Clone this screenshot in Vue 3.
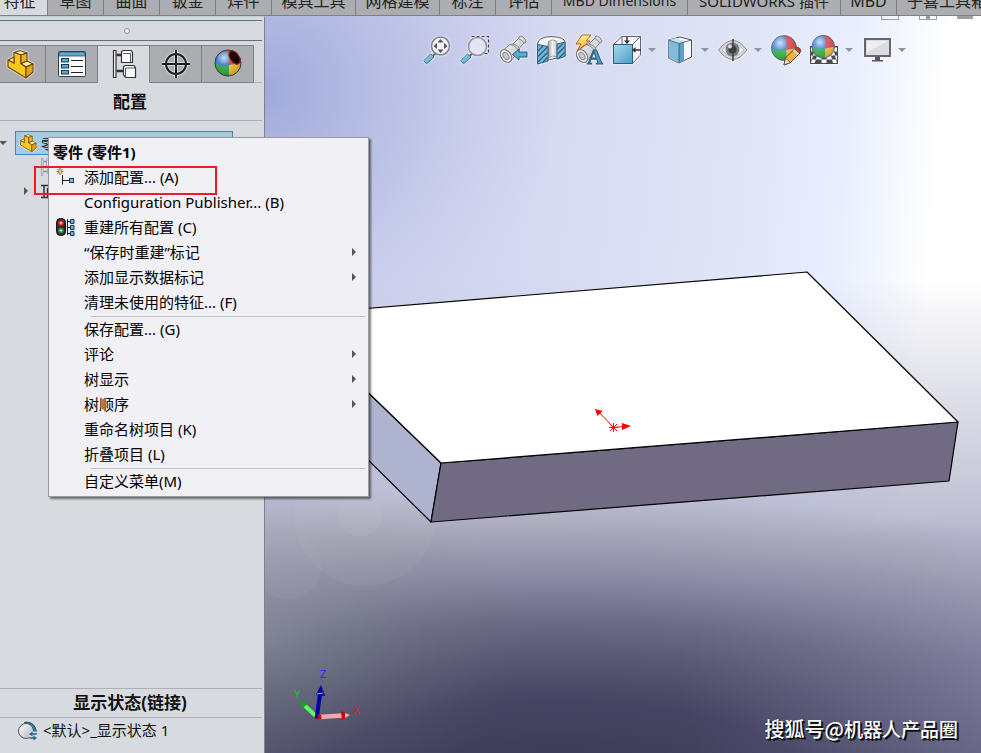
<script setup>
const commandTabs = [
  { label: '特征', size: 'first' },
  { label: '草图', size: 'short' },
  { label: '曲面', size: 'short' },
  { label: '钣金', size: 'short' },
  { label: '焊件', size: 'short' },
  { label: '模具工具', size: 'medium' },
  { label: '网格建模', size: 'medium' },
  { label: '标注', size: 'short' },
  { label: '评估', size: 'short' },
  { label: 'MBD Dimensions', size: 'long' },
  { label: 'SOLIDWORKS 插件', size: 'longer' },
  { label: 'MBD', size: 'short' },
  { label: '子喜工具箱', size: 'last' },
]

const panelTabs = [
  { icon: 'part', label: '设计树' },
  { icon: 'props', label: '属性' },
  { icon: 'config', label: '配置' },
  { icon: 'target', label: '尺寸专家' },
  { icon: 'appearance', label: '外观' },
]
const activePanel = 'config'

const viewTools = [
  { icon: 'fit', label: '整屏显示' },
  { icon: 'area', label: '局部放大' },
  { icon: 'previous', label: '上一视图' },
  { icon: 'section', label: '剖面视图' },
  { icon: 'annotation', label: '动态注解视图' },
  { icon: 'orient', label: '视图定向', menu: true },
  { icon: 'style', label: '显示样式', menu: true },
  { icon: 'eye', label: '隐藏/显示', menu: true },
  { icon: 'paint', label: '编辑外观' },
  { icon: 'scene', label: '应用布景', menu: true },
  { icon: 'monitor', label: '视图设定', menu: true },
]

const menuGroups = [
  [
    { label: '添加配置... (A)', icon: 'add-config' },
    { label: 'Configuration Publisher... (B)' },
    { label: '重建所有配置 (C)', icon: 'rebuild' },
    { label: '“保存时重建”标记', sub: true },
    { label: '添加显示数据标记', sub: true },
    { label: '清理未使用的特征... (F)' },
  ],
  [
    { label: '保存配置... (G)' },
    { label: '评论', sub: true },
    { label: '树显示', sub: true },
    { label: '树顺序', sub: true },
    { label: '重命名树项目 (K)' },
    { label: '折叠项目 (L)' },
  ],
  [{ label: '自定义菜单(M)' }],
]
</script>

<template>
  <div class="app">
    <svg class="sprite" aria-hidden="true">
      <defs>
        <linearGradient id="g-blue" x1="0" y1="0" x2="1" y2="1">
          <stop offset="0" stop-color="#a9d9ee" /><stop offset="1" stop-color="#4b9cc4" />
        </linearGradient>
        <linearGradient id="g-metal" x1="0" y1="0" x2="1" y2="1">
          <stop offset="0" stop-color="#ffffff" /><stop offset="1" stop-color="#b4b4ba" />
        </linearGradient>
        <linearGradient id="g-hole" x1="0" y1="0" x2="1" y2="0">
          <stop offset="0" stop-color="#9b9ba2" /><stop offset="0.500" stop-color="#f4f4f8" /><stop offset="1" stop-color="#c4c4ca" />
        </linearGradient>
        <radialGradient id="g-shine" cx="0.35" cy="0.3" r="0.75">
          <stop offset="0" stop-color="#fff" stop-opacity="0.75" />
          <stop offset="0.4" stop-color="#fff" stop-opacity="0.1" />
          <stop offset="1" stop-color="#000" stop-opacity="0.2" />
        </radialGradient>
        <linearGradient id="g-bolt" x1="0" y1="0" x2="0" y2="1">
          <stop offset="0" stop-color="#fff0a8" /><stop offset="1" stop-color="#f5a623" />
        </linearGradient>
      </defs>

      <symbol id="i-part" viewBox="0 0 32 32">
        <g stroke="#6b4206" stroke-width="1.1" stroke-linejoin="round">
          <path d="M4 12 L10 9 L10 4.500 L16 2.500 L23 5 V13 L29 16 V24 L22 30 L4 19 Z" fill="#fbd32c" stroke="#fff" stroke-opacity="0.600" stroke-width="3" />
          <path d="M10 4.500 L17 7 L23 5 L16 2.500 Z" fill="#fff0a0" />
          <path d="M10 4.500 L17 7 V15.500 L22 19 V30 L4 19 V12 L10 15 Z" fill="#f8c81e" />
          <path d="M4 12 L10 9 V15 Z" fill="#ffe880" />
          <path d="M17 15.500 L23 13 L29 16 L22 19 Z" fill="#fff0a0" />
          <path d="M22 19 L29 16 V24 L22 30 Z" fill="#dfa51a" />
          <path d="M17 7 L23 5 V13 L17 15.500 Z" fill="#e9b31c" />
        </g>
      </symbol>

      <symbol id="i-props" viewBox="0 0 32 32">
        <rect x="2.500" y="3.500" width="27" height="25" rx="1" fill="#fafafa" stroke="#2b4152" />
        <path d="M3 4h26v4H3z" fill="#5fa9d0" stroke="#1e4c6b" stroke-width="0.800" />
        <g fill="#5aa9ce" stroke="#173a52">
          <rect x="5.500" y="10.500" width="7" height="3.500" />
          <rect x="5.500" y="16.500" width="7" height="3.500" />
          <rect x="5.500" y="22.500" width="7" height="3.500" />
        </g>
        <path d="M15 12.500h12M15 18.500h12M15 24.500h12" stroke="#222" stroke-width="1.200" />
      </symbol>

      <symbol id="i-config" viewBox="0 0 32 32">
        <g fill="#fff" stroke="#333" stroke-width="1.200">
          <path d="M5.500 2.500h2.500v27H5.500z" />
          <path d="M8.500 7h6M8.500 23h7" stroke-width="2.400" />
          <path d="M13.500 3.500 L15.500 2.500 H23 L24.500 4.500 V14.500 H13.500 Z" />
          <path d="M15 5.500h7.500v8.500" fill="none" stroke-width="0.800" />
          <path d="M15.500 18.500 L17.500 17.500 H26 L27.500 20 V29.500 H18 L15.500 27 Z" />
          <path d="M17.500 20h10M17.500 20v9" fill="none" stroke-width="0.800" />
        </g>
      </symbol>

      <symbol id="i-target" viewBox="0 0 32 32">
        <g fill="none" stroke="#fff" stroke-width="4" opacity="0.500">
          <circle cx="16" cy="16" r="10" /><path d="M16 2v28M2 16h28" />
        </g>
        <g fill="none" stroke="#1d1d1d" stroke-width="2">
          <circle cx="16" cy="16" r="10" /><path d="M16 2v28M2 16h28" />
        </g>
      </symbol>

      <symbol id="i-appearance" viewBox="0 0 32 32">
        <circle cx="16" cy="15" r="13" fill="#2f73c9" />
        <path d="M16 2 A13 13 0 0 1 29 15 L17 17 Z" fill="#d5362b" />
        <path d="M29 15 A13 13 0 0 1 17 28 L17 17 Z" fill="#eebf2d" />
        <path d="M3 15 Q10 20 17 17 L17 28 A13 13 0 0 1 3 15 Z" fill="#2ca53a" />
        <circle cx="16" cy="15" r="13" fill="url(#g-shine)" stroke="#3a3a3a" />
        <ellipse cx="22.500" cy="9.500" rx="4.500" ry="7.500" transform="rotate(-35 22.500 9.500)" fill="#14090a" stroke="#a8241d" />
      </symbol>

      <symbol id="i-fit" viewBox="0 0 32 32">
        <path d="M14.500 19.500 L11 22.500" stroke="#666" stroke-width="2" />
        <path d="M9.500 20 L13 23 L6 29.500 Q3.500 29 3 26.500 Z" fill="url(#g-blue)" stroke="#3b7593" />
        <circle cx="19.500" cy="12" r="9" fill="#f1f1f8" stroke="#85858d" stroke-width="1.600" />
        <path d="M19.500 5l3 3.500h-6zM19.500 19l3-3.500h-6zM12.500 12l3.500-3v6zM26.500 12l-3.500-3v6z" fill="#555" />
      </symbol>
      <symbol id="i-area" viewBox="0 0 32 32">
        <path d="M12.500 2.500h17v17h-5" fill="none" stroke="#444" stroke-width="1.200" stroke-dasharray="3 2" />
        <path d="M13.500 19.500 L10 22.500" stroke="#666" stroke-width="2" />
        <path d="M8.500 20 L12 23 L5 29.500 Q2.500 29 2 26.500 Z" fill="url(#g-blue)" stroke="#3b7593" />
        <circle cx="18.500" cy="12.500" r="9" fill="#e4e4f6" stroke="#94949c" stroke-width="1.600" />
      </symbol>
      <symbol id="scope" viewBox="0 0 32 32">
        <path d="M5 17 L13 10.500 L16 10 L22 4 Q22 2 24 2 Q28 3 29 7 Q29 9 27 9 L22.500 14 L22 17 L13 28 Q3 29 5 17 Z" fill="url(#g-metal)" stroke="#7c7c84" />
        <path d="M13 10.500 Q20 12 22 18 M16 10 Q21 11 22.500 14.500 M21.500 4.500 Q25.500 6 27 9.500" fill="none" stroke="#8a8a90" />
        <ellipse cx="9" cy="22" rx="5" ry="7" transform="rotate(-35 9 22)" fill="#efeff4" stroke="#76767c" />
        <ellipse cx="9" cy="22" rx="2.500" ry="4" transform="rotate(-35 9 22)" fill="#c8c8d0" stroke="#88888e" />
      </symbol>
      <symbol id="i-previous" viewBox="0 0 32 32">
        <use href="#scope" />
        <path d="M15.500 20.500 L22 15 V18 H30 V23 H22 V26 Z" fill="#59a9cf" stroke="#235f80" />
      </symbol>
      <symbol id="i-section" viewBox="0 0 32 32">
        <path d="M2.500 10 Q3 3 16 2.500 Q29.500 3 30 8 V22 L22 24 L13 26 L2.500 29.500 Z" fill="#f4f4f8" stroke="#5b5b62" />
        <path d="M13 9.500 Q13 6 18 6 Q22 6.500 22 9 V23 Q18 20.500 13 24 Z" fill="url(#g-hole)" stroke="#8b8b92" stroke-width="0.800" />
        <path d="M2.500 10.500 L13 12.500 V27 L2.500 30 Z" fill="#6fb8da" stroke="#2f5f7a" />
        <path d="M22 10 L30 8 V22.500 L22 25 Z" fill="#6fb8da" stroke="#2f5f7a" />
        <path d="M3 17l5-5M3 22.500l9.500-9.500M3 28l9.500-9.500M8 28l4.500-4.500M22.500 15l5.500-5.500M22.500 20l7-7M24 24l5.500-5.500" stroke="#2f5f7a" stroke-width="1.200" />
      </symbol>
      <symbol id="i-annotation" viewBox="0 0 32 32">
        <use href="#scope" />
        <path d="M9 1 H18 L13 7 H17 L4 17 L8 10 H3 Z" fill="url(#g-bolt)" stroke="#b2650c" />
        <text x="14" y="30" class="glyph-a">A</text>
      </symbol>
      <symbol id="i-orient" viewBox="0 0 32 32">
        <path d="M11 2.500 H29.500 V21 L21.500 29.500 V10.500 H2.500 Z" fill="#f5f5fb" />
        <path d="M2.500 10.500 L11 2.500 H29.500 V21 L21.500 29.500 M21.500 10.500 L29.500 2.500 M11 2.500V10" fill="none" stroke="#66666e" />
        <rect x="2.500" y="10.500" width="19" height="19" fill="url(#g-blue)" stroke="#2b5e78" />
        <path d="M16 3v6M30 16h-7" stroke="#333" stroke-width="1.500" />
        <path d="M13 6.500h6l-3 3.500zM24.500 13v6l-3.500-3z" fill="#333" />
      </symbol>
      <symbol id="i-style" viewBox="0 0 32 32">
        <path d="M4.500 6 L16 3 L27.500 6 V23 L15 29 L4.500 24 Z" fill="#f7f7fb" stroke="#4c4c54" />
        <path d="M4.500 6 L15 9.500 V29 L4.500 24 Z" fill="#7fbddb" />
        <path d="M15 9.500 L20 8 V26.500 L15 29 Z" fill="#58a3c9" />
        <path d="M4.500 6 L12 4 L22 7.500 L15 9.500 Z" fill="#c4e4f1" />
        <path d="M4.500 6 L15 9.500 L27.500 6 M15 9.500 V29" fill="none" stroke="#4c4c54" stroke-width="0.800" />
      </symbol>
      <symbol id="i-eye" viewBox="0 0 32 32">
        <path d="M1.500 16 Q16 -3 30 16 Q16 35 1.500 16 Z" fill="#d5d5dc" stroke="#8a8a92" />
        <path d="M5 16 Q16 3 27 16 Q16 29 5 16 Z" fill="#f7f7fa" stroke="#aaa" stroke-width="0.800" />
        <circle cx="15.500" cy="15.500" r="7" fill="#7c7c82" />
        <circle cx="15.500" cy="15.500" r="4" fill="#3c3c40" />
        <circle cx="13" cy="12.500" r="2" fill="#d9d9de" />
        <path d="M16 5v22" stroke="#444" stroke-width="1.600" />
      </symbol>
      <symbol id="ball" viewBox="0 0 32 32">
        <circle cx="14" cy="14" r="12.500" fill="#4587dc" />
        <path d="M14 1.500 Q18 8 16 16 L26.500 14 A12.500 12.500 0 0 0 14 1.500 Z" fill="#dc4b50" />
        <path d="M16 16 L26.500 14 A12.500 12.500 0 0 1 15 26.500 Z" fill="#f0c245" />
        <path d="M1.500 15 Q9 17 16 16 Q17 22 15 26.500 A12.500 12.500 0 0 1 1.500 15 Z" fill="#36b24a" />
        <circle cx="14" cy="14" r="12.500" fill="url(#g-shine)" stroke="#5b5b70" stroke-width="0.800" />
      </symbol>
      <symbol id="i-paint" viewBox="0 0 32 32">
        <use href="#ball" />
        <path d="M14 31 L15.500 24 L25 14.500 L30 19 L20.500 28.500 Z" fill="#f3b14b" stroke="#55402a" />
        <path d="M25 14.500 L27 13 Q31 14 31 17.500 L29.500 19 Z" fill="#c63c37" stroke="#6b4642" />
        <path d="M15.500 24 L20.500 28.500 L14 31 Z" fill="#f0dfc5" stroke="#55402a" stroke-width="0.800" />
        <path d="M23.500 16l5 4.500" stroke="#ddd" stroke-width="1.600" />
      </symbol>
      <symbol id="i-scene" viewBox="0 0 32 32">
        <path d="M2 12h28v18H2z" fill="#4a4a50" />
        <path d="M3 13.500h3.500l-1 4H3zM25.500 13.500H29v4h-2.500zM6 17.500h4l-1 4H5zM22 17.500h4l1 4h-4zM3 21.500h2l-1 4H3zM9 21.500h4.500v4h-5.500zM18.500 21.500h4.500l1 4h-5.500zM27 21.500h2v4h-1zM4 25.500h4l-1.500 3.500h-3.500zM13.500 25.500h5v3.500h-5zM24 25.500h4l1 3.500h-4z" fill="#fff" />
        <use href="#ball" x="2.500" y="0" width="29" height="29" />
      </symbol>
      <symbol id="i-monitor" viewBox="0 0 32 32">
        <rect x="4" y="5" width="25" height="17" fill="#dcdce0" stroke="#66666c" stroke-width="2" />
        <path d="M6 7h21L6 18z" fill="#efeff2" />
        <path d="M14 23h5v3h3v1.500H11V26h3z" fill="#55555b" />
      </symbol>

      <symbol id="i-add-config" viewBox="0 0 20 20">
        <path d="M6.500 8v9.500M6.500 13.500h8" stroke="#222" fill="none" />
        <rect x="13.500" y="11.500" width="4" height="4" fill="#79bde0" stroke="#123f5c" />
        <path d="M4 1v7M.500 4.500h7M1.500 2l5 5M6.500 2l-5 5" stroke="#a05a10" />
        <circle cx="4" cy="4.500" r="1.200" fill="#ffd873" />
      </symbol>
      <symbol id="i-rebuild" viewBox="0 0 20 20">
        <rect x="0.500" y="1.500" width="9" height="17" rx="4" fill="#2b2b2b" stroke="#111" />
        <circle cx="5" cy="6" r="3" fill="#cf2020" /><path d="M5 4.500v3M3.500 6h3" stroke="#fff" stroke-width="0.800" />
        <circle cx="5" cy="13.500" r="3" fill="#218c33" /><path d="M5 12v3M3.500 13.500h3" stroke="#fff" stroke-width="0.800" />
        <path d="M11.500 2v16M11.500 4.500h3M11.500 10.500h3M11.500 16.500h3" stroke="#222" />
        <path d="M14.500 2.500h3.500v4h-3.500zM14.500 8.500h3.500v4h-3.500zM14.500 14.500h3.500v4h-3.500z" fill="#6bb4dc" stroke="#123f5c" />
      </symbol>
      <symbol id="i-display" viewBox="0 0 20 20">
        <path d="M8 1 Q17 1 18.500 11 L14 12 A8 8 0 0 0 6 2Z" fill="#2b83ae" stroke="#1a4f6d" />
        <circle cx="8" cy="10" r="7.500" fill="url(#g-metal)" stroke="#55555d" />
        <path d="M11.500 10.500h8v9h-8z" fill="#d7dbdf" />
        <path d="M19 13h-6M11.500 17h6" stroke="#1d6a94" stroke-width="1.400" />
        <path d="M14.500 10.500v5L11 13zM15.500 14.500v5L19 17z" fill="#1d6a94" />
      </symbol>
    </svg>

    <nav class="commands">
      <button v-for="tab in commandTabs" :key="tab.label" type="button" class="command" :class="tab.size">{{ tab.label }}</button>
    </nav>

    <div class="workspace">
      <aside class="sidebar">
        <div class="grip"><span class="dot"></span></div>
        <div class="panel-tabs">
          <button
            v-for="tab in panelTabs"
            :key="tab.icon"
            type="button"
            class="panel-tab"
            :class="{ active: tab.icon === activePanel }"
            :aria-label="tab.label"
          >
            <svg class="icon"><use :href="'#i-' + tab.icon" /></svg>
          </button>
        </div>
        <h2 class="panel-title">配置</h2>

        <div class="tree">
          <div class="node root">
            <span class="caret down"></span>
            <div class="selected">
              <svg class="icon-small"><use href="#i-part" /></svg>
              <span>零件1</span>
            </div>
          </div>
          <div class="node child">
            <svg class="icon-small faded"><use href="#i-config" /></svg>
          </div>
          <div class="node child">
            <span class="caret right"></span>
            <svg class="icon-small" viewBox="0 0 20 20">
              <path d="M2 4.500h12M5 4.500v12M2 16.500h9M8.500 7v9" fill="none" stroke="#333" stroke-width="1.500" />
            </svg>
          </div>
        </div>

        <h2 class="state-title">显示状态(链接)</h2>
        <div class="state-row">
          <svg class="icon-small"><use href="#i-display" /></svg>
          <span>&lt;默认&gt;_显示状态 1</span>
        </div>
      </aside>

      <main class="viewport">
        <svg class="scene" viewBox="265 16 716 737" preserveAspectRatio="xMinYMin slice">
          <defs>
            <radialGradient id="ground" gradientUnits="userSpaceOnUse" cx="0" cy="0" r="1" gradientTransform="translate(560 790) scale(850 300)">
              <stop offset="0.100" stop-color="#3e3c58" />
              <stop offset="0.300" stop-color="#454462" />
              <stop offset="0.430" stop-color="#565672" />
              <stop offset="0.570" stop-color="#6c6c86" />
              <stop offset="0.730" stop-color="#8f8ea8" />
              <stop offset="0.870" stop-color="#a8a7ba" />
              <stop offset="1" stop-color="#b8b9cf" />
            </radialGradient>
            <linearGradient id="sky" gradientUnits="userSpaceOnUse" x1="265" y1="100" x2="975" y2="160">
              <stop offset="0" stop-color="#c9cdec" />
              <stop offset="0.420" stop-color="#d7daf1" />
              <stop offset="0.650" stop-color="#dfe4f6" />
              <stop offset="0.820" stop-color="#e9effe" />
              <stop offset="0.950" stop-color="#ffffff" />
            </linearGradient>
            <radialGradient id="corner" gradientUnits="userSpaceOnUse" cx="0" cy="0" r="1" gradientTransform="translate(265 90) scale(300 270)">
              <stop offset="0" stop-color="#98a4d8" stop-opacity="0.850" />
              <stop offset="0.450" stop-color="#a8b0de" stop-opacity="0.500" />
              <stop offset="1" stop-color="#c0c4e8" stop-opacity="0" />
            </radialGradient>
            <linearGradient id="horizon" x1="0" y1="0" x2="0" y2="1">
              <stop offset="0.500" stop-color="#fff" />
              <stop offset="1" stop-color="#fff" stop-opacity="0" />
            </linearGradient>
            <radialGradient id="left-haze" gradientUnits="userSpaceOnUse" cx="0" cy="0" r="1" gradientTransform="translate(265 640) scale(260 170)">
              <stop offset="0" stop-color="#8d9698" stop-opacity="0.450" />
              <stop offset="1" stop-color="#707478" stop-opacity="0" />
            </radialGradient>
            <radialGradient id="right-haze" gradientUnits="userSpaceOnUse" cx="0" cy="0" r="1" gradientTransform="translate(981 690) scale(300 180)">
              <stop offset="0" stop-color="#7a7aa0" stop-opacity="0.400" />
              <stop offset="1" stop-color="#7a7aa0" stop-opacity="0" />
            </radialGradient>
            <mask id="sky-mask"><rect x="265" y="16" width="716" height="524" fill="url(#horizon)" /></mask>
          </defs>
          <rect x="265" y="16" width="716" height="737" fill="url(#ground)" />
          <rect x="265" y="16" width="716" height="737" fill="url(#left-haze)" />
          <rect x="265" y="16" width="716" height="737" fill="url(#right-haze)" />
          <rect x="265" y="16" width="716" height="524" fill="url(#sky)" mask="url(#sky-mask)" />
          <rect x="265" y="16" width="716" height="400" fill="url(#corner)" />
          <circle cx="365" cy="515" r="71" fill="#d6dbd6" opacity="0.070" />
          <circle cx="360" cy="515" r="22" fill="#dce0da" opacity="0.070" />
          <circle cx="288" cy="565" r="34" fill="#c9c4e6" opacity="0.080" />

          <g stroke="#000" stroke-width="1.200" stroke-linejoin="round">
            <path d="M288 315 L441 463 L431 522 L280 373 Z" fill="#aeb3d0" />
            <path d="M441 463 L958 422 L949 481 L431 522 Z" fill="#706b82" />
            <path d="M288 315 L807 272 L958 422 L441 463 Z" fill="#fff" />
          </g>

          <g stroke="#f00" fill="#f00">
            <path d="M613.500 427.500 L598 411 M613.500 427.500 L624 426.500 M609 427.500h9M613.500 423v9M610 424l7 7M617 424l-7 7" fill="none" />
            <path d="M595 409 L602.500 411 L597.500 416 Z M631 426 L622 423 V430 Z" stroke="none" />
          </g>

          <g fill="none">
            <path d="M317 717 L303 704" stroke="#5dff5d" stroke-width="4" />
            <path d="M299 701 L308 703 L303 708 Z" fill="#0ea50e" />
            <path d="M319 717 L343 715.500" stroke="#f2a7ab" stroke-width="4.500" />
            <path d="M341 711 L350 715 L342 720 Z" fill="#c00" />
            <path d="M345 713 L350 715 L345 718 Z" fill="#f7b9bb" />
            <path d="M317 716 L320 694" stroke="#0000a8" stroke-width="4" />
            <path d="M321 685 L325 696 L316 695 Z" fill="#0000a8" />
            <path d="M317 694 L323 693" stroke="#b6b6ff" />
            <circle cx="319" cy="717" r="2.500" fill="#c00" />
            <circle cx="316" cy="717" r="1.500" fill="#009" />
          </g>
          <g class="axis-label">
            <text x="320" y="678" fill="#2424ee">Z</text>
            <text x="294" y="698" fill="#1fc01f">Y</text>
            <text x="353" y="714" fill="#e02020">X</text>
          </g>
        </svg>

        <div class="view-tools">
          <template v-for="tool in viewTools" :key="tool.icon">
            <button type="button" class="tool" :aria-label="tool.label">
              <svg class="icon glow"><use :href="'#i-' + tool.icon" /></svg>
            </button>
            <button v-if="tool.menu" type="button" class="drop" :aria-label="tool.label + '菜单'"></button>
          </template>
        </div>

        <div class="window-buttons">
          <span class="win"></span>
          <span class="win pinned"></span>
          <span class="win solid"></span>
        </div>

        <p class="credit"><span class="site">搜狐号@</span>机器人产品圈</p>
      </main>
    </div>

    <div class="context-menu" role="menu">
      <div class="menu-title">零件 (零件1)</div>
      <div v-for="(group, g) in menuGroups" :key="g" class="menu-group">
        <button v-for="item in group" :key="item.label" type="button" class="menu-item" role="menuitem">
          <span class="menu-icon">
            <svg v-if="item.icon" class="icon-small"><use :href="'#i-' + item.icon" /></svg>
          </span>
          <span class="menu-label">{{ item.label }}</span>
          <span v-if="item.sub" class="caret right"></span>
        </button>
      </div>
    </div>
    <div class="highlight"></div>
  </div>
</template>

<style>
body {
  margin: 0;
}
</style>

<style scoped>
.app {
  position: relative;
  display: flex;
  flex-direction: column;
  height: 100vh;
  overflow: hidden;
  background: #d7dbdf;
  color: #111;
  font-family: "Noto Sans", "Noto Sans CJK SC", sans-serif;
  font-size: 15px;
}
button {
  margin: 0;
  padding: 0;
  border: 0;
  background: none;
  color: inherit;
  font: inherit;
}
h2,
p {
  margin: 0;
}
.sprite {
  position: absolute;
  width: 0;
  height: 0;
}
.glyph-a {
  font: bold 22px "Liberation Serif", serif;
  fill: #4a9cc6;
  stroke: #28637f;
  stroke-width: 1px;
}
.icon {
  display: block;
  width: 32px;
  height: 32px;
}
.icon-small {
  display: block;
  flex: none;
  width: 20px;
  height: 20px;
}
.glow {
  filter: drop-shadow(0 0 1px #fff);
}

/* Command tabs */
.commands {
  display: flex;
  flex: none;
  height: 15px;
  overflow: hidden;
  background: #abadb0;
  border-bottom: 1px solid #7e8082;
}
.command {
  display: flex;
  flex: none;
  align-items: flex-end;
  justify-content: center;
  box-sizing: border-box;
  width: 56px;
  height: 15px;
  border-right: 1px solid #7e8082;
  color: #222;
  font-size: 16px;
  line-height: 28px;
  white-space: nowrap;
}
.command.first {
  width: 48px;
  padding-right: 8px;
  background: #d7dbdf;
}
.command.medium {
  width: 84px;
}
.command.long {
  width: 136px;
  font-size: 14px;
}
.command.longer {
  width: 153px;
  font-size: 15px;
}
.command.last {
  flex: 1;
  justify-content: flex-start;
  padding-left: 10px;
  border-right: 0;
}

.workspace {
  display: flex;
  flex: 1;
  min-height: 0;
}

/* Sidebar */
.sidebar {
  display: flex;
  flex: none;
  flex-direction: column;
  box-sizing: border-box;
  width: 265px;
  padding-right: 2px;
  border-right: 1px solid #808285;
  border-top: 1px solid #b9d0d0;
}
.grip {
  display: flex;
  align-items: center;
  justify-content: center;
  height: 19px;
  margin: 3px 0 4px;
  padding-right: 8px;
  border-top: 1px solid #666b86;
  border-bottom: 1px solid #666b86;
}
.dot {
  width: 4px;
  height: 4px;
  border: 1px solid #94969a;
  border-radius: 50%;
  background: #eee;
}
.panel-tabs {
  display: flex;
  margin-left: -6px;
  border-bottom: 1px solid #b0b2b5;
}
.panel-tab {
  display: flex;
  align-items: center;
  justify-content: center;
  box-sizing: border-box;
  width: 52px;
  height: 38px;
  margin-bottom: -1px;
  border: 1px solid #808285;
  border-left: 0;
  background: #abadb0;
}
.panel-tab.active {
  background: #d7dbdf;
  border-color: #808285 #808285 #d7dbdf;
}
.panel-title,
.state-title {
  padding-right: 2px;
  font-size: 17px;
  font-weight: 700;
  text-align: center;
}
.panel-title {
  height: 37px;
  line-height: 38px;
  border-bottom: 1px solid #aeb0b3;
}
.tree {
  flex: 1;
  padding-top: 10px;
}
.node {
  display: flex;
  align-items: center;
  height: 24px;
}
.selected {
  display: flex;
  flex: none;
  align-items: center;
  gap: 3px;
  box-sizing: border-box;
  width: 218px;
  height: 24px;
  padding-left: 2px;
  border: 1px solid #3d8cc0;
  background: #a5cbe4;
}
.node.root {
  gap: 8px;
}
.node.root .caret {
  margin-left: -1px;
}
.node.child {
  justify-content: flex-start;
  gap: 9px;
  padding-left: 24px;
}
.node.child .icon-small:first-child {
  margin-left: 14px;
}
.faded {
  opacity: 0.4;
}
.caret {
  flex: none;
  width: 0;
  height: 0;
  border: 4px solid transparent;
}
.caret.down {
  border-top-color: #555;
  border-bottom-width: 0;
}
.caret.right {
  border-left-color: #555;
  border-right-width: 0;
}
.node.child .caret {
  margin-right: 2px;
}
.state-title {
  height: 28px;
  line-height: 28px;
  border-top: 1px solid #aeb0b3;
  border-bottom: 1px solid #aeb0b3;
}
.state-row {
  display: flex;
  align-items: flex-start;
  gap: 5px;
  height: 35px;
  padding-left: 18px;
  line-height: 24px;
}
.state-row .icon-small {
  margin-top: 3px;
}

/* Graphics area */
.viewport {
  position: relative;
  flex: 1;
  min-width: 0;
  overflow: hidden;
}
.scene {
  position: absolute;
  inset: 0;
  width: 100%;
  height: 100%;
}
.axis-label {
  font: 10px "Liberation Sans", sans-serif;
}
.view-tools {
  position: relative;
  display: flex;
  align-items: center;
  padding: 18px 0 0 153px;
}
.tool {
  display: flex;
  flex: none;
  justify-content: center;
  width: 38px;
}
.drop {
  flex: none;
  width: 15px;
  height: 32px;
}
.drop::before {
  content: "";
  display: block;
  width: 0;
  margin-left: 2px;
  border: 4px solid transparent;
  border-top-color: #9292a2;
  border-bottom: 0;
}
.window-buttons {
  position: absolute;
  top: 0;
  right: 8px;
  display: flex;
  gap: 20px;
}
.win {
  box-sizing: border-box;
  width: 18px;
  height: 4px;
  border: 1px solid #a0a0a4;
  border-top: 0;
}
.win.pinned {
  background: linear-gradient(90deg, transparent 6px, #999 6px, #999 10px, transparent 10px);
}
.win.solid {
  width: 16px;
  height: 3px;
  border: 0;
  background: #a0a0a4;
}
.credit {
  position: absolute;
  right: 23px;
  bottom: 10px;
  color: #fff;
  font-family: "Noto Sans CJK SC", sans-serif;
  font-size: 19px;
  font-weight: 500;
  line-height: 28px;
  text-shadow: 1px 1px 0 #111, 2px 2px 0 #111;
  white-space: nowrap;
}
.site {
  font-size: 20px;
}

/* Context menu */
.context-menu {
  position: absolute;
  top: 137px;
  left: 48px;
  box-sizing: border-box;
  width: 321px;
  padding: 3px 3px 1px 4px;
  border: 1px solid #9a9a9c;
  background: #f0f0f5;
  box-shadow: 2px 2px 2px rgba(0, 0, 0, 0.5);
  color: #000;
}
.menu-title {
  height: 25px;
  font-weight: 700;
  line-height: 22px;
}
.menu-group + .menu-group {
  padding-top: 2px;
  background: linear-gradient(#c4c4c8, #c4c4c8) 38px 0 / 100% 1px no-repeat;
}
.menu-item {
  display: flex;
  align-items: center;
  box-sizing: border-box;
  width: 100%;
  height: 25px;
  padding-bottom: 4px;
  text-align: left;
  white-space: nowrap;
}
.menu-icon {
  flex: none;
  width: 28px;
  padding-left: 3px;
}
.menu-label {
  flex: 1;
}
.menu-item .caret {
  margin-right: 9px;
}
.highlight {
  position: absolute;
  top: 166px;
  left: 34px;
  box-sizing: border-box;
  width: 183px;
  height: 29px;
  border: 2px solid #ec1c24;
  pointer-events: none;
}
</style>
